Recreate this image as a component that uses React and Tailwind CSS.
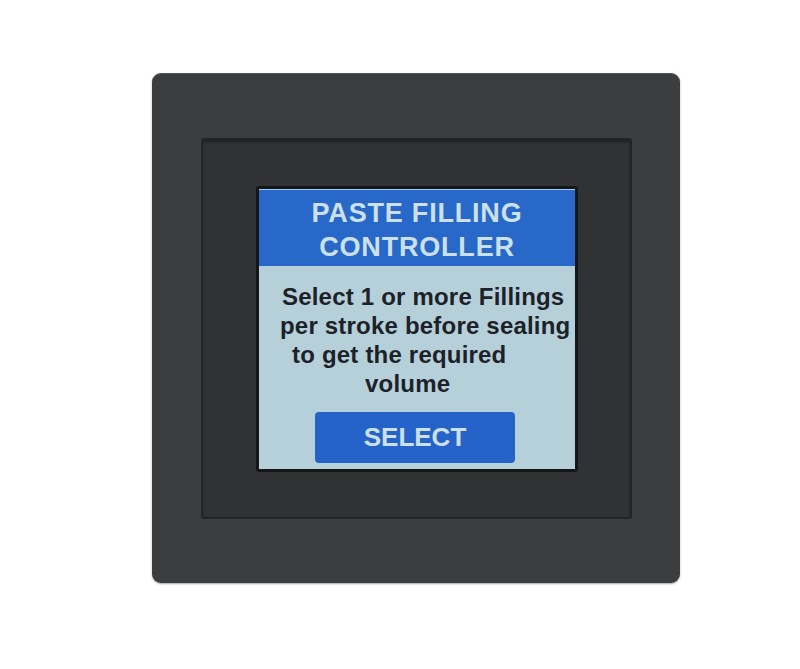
const bodyLines = [
	{ text: "Select 1 or more Fillings", pad: "pl-[23px]" },
	{ text: "per stroke before sealing", pad: "pl-[21px]" },
	{ text: "to get the required", pad: "pl-[33px]" },
	{ text: "volume", pad: "pl-[106px]" },
];

const App = () => {
	return (
		<div
			className="w-[800px] h-[669px] bg-white pt-[73px] pl-[152px]"
			style={{ fontFamily: '"Liberation Sans", Arial, sans-serif' }}
		>
			{/* outer bezel */}
			<div className="w-[528px] h-[510px] rounded-[9px] bg-[#3c3d3f] border-t border-[#55575a] shadow-[0_1px_2px_rgba(0,0,0,0.35)] pt-[64px] pl-[49px]">
				{/* recessed frame */}
				<div className="w-[431px] h-[381px] rounded-[3px] bg-[#313234] border-2 border-[#232426] shadow-[inset_0_2px_3px_rgba(0,0,0,0.35)] pt-[46px] pl-[53px]">
					{/* screen */}
					<div className="w-[322px] h-[286px] rounded-[3px] bg-[#151617] p-[3px]">
						<div className="w-[316px] h-[280px] flex flex-col bg-[#b6d0da]">
							<div className="h-[77px] bg-[#2868c8] border-t border-[#9fd0ee] pt-[6px] text-center text-[27px] leading-[34px] font-bold text-[#cce0e7] tracking-[0.8px]">
								<div>PASTE FILLING</div>
								<div>CONTROLLER</div>
							</div>
							<div className="pt-[16px] text-[24px] leading-[29px] font-bold text-[#1c2228] tracking-[0.2px]">
								{bodyLines.map((line) => (
									<div key={line.text} className={`${line.pad} whitespace-nowrap`}>
										{line.text}
									</div>
								))}
							</div>
							<div className="mt-[14px] ml-[56px] w-[200px] h-[51px] rounded-[4px] bg-[#2563c9] flex items-center justify-center text-[26px] font-bold text-[#cce0e7]">
								SELECT
							</div>
						</div>
					</div>
				</div>
			</div>
		</div>
	);
};

export default App;
